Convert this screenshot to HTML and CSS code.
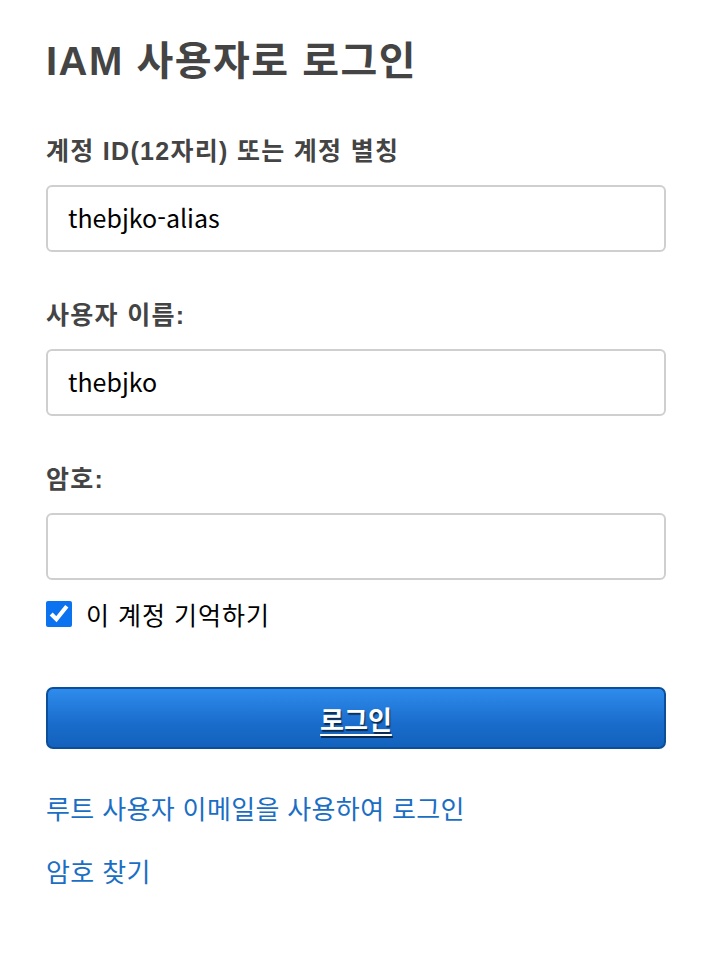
FILE: index.html
```html
<!DOCTYPE html>
<html lang="ko">
<head>
<meta charset="utf-8">
<title>IAM 사용자로 로그인</title>
<link rel="stylesheet" href="styles.css">
</head>
<body>
<main class="signin">
  <h1 class="title">IAM 사용자로 로그인</h1>
  <form class="form">
    <div class="field">
      <label class="label" for="account">계정 ID(12자리) 또는 계정 별칭</label>
      <input class="input" id="account" type="text" value="thebjko-alias">
    </div>
    <div class="field">
      <label class="label" for="username">사용자 이름:</label>
      <input class="input" id="username" type="text" value="thebjko">
    </div>
    <div class="field field-password">
      <label class="label" for="password">암호:</label>
      <input class="input" id="password" type="password">
    </div>
    <label class="remember">
      <input class="check" type="checkbox" checked>
      <span>이 계정 기억하기</span>
    </label>
    <button class="submit" type="button"><span>로그인</span></button>
  </form>
  <nav class="links">
    <a class="link" href="#">루트 사용자 이메일을 사용하여 로그인</a>
    <a class="link" href="#">암호 찾기</a>
  </nav>
</main>
</body>
</html>
```
FILE: styles.css
```css
* { box-sizing: border-box; }
html, body { margin: 0; background: #fff; }
body {
  font-family: "Noto Sans CJK KR", "Noto Sans", sans-serif;
  color: #000;
}
.signin {
  width: 620px;
  margin-left: 46px;
  padding-top: 33px;
}
.title {
  margin: 0;
  font-family: "Liberation Sans", "Noto Sans CJK KR", sans-serif;
  font-weight: 700;
  font-size: 40px;
  line-height: 56px;
  letter-spacing: 1.5px;
  color: #444;
}
.form { display: flex; flex-direction: column; margin-top: 45px; }
.field { display: flex; flex-direction: column; margin-bottom: 46px; }
.field-password { margin-bottom: 21px; }
.label {
  font-family: "Liberation Sans", "Noto Sans CJK KR", sans-serif;
  font-weight: 700;
  font-size: 25px;
  line-height: 34px;
  letter-spacing: 1.3px;
  color: #444;
  margin-bottom: 17px;
}
.input {
  height: 67px;
  border: 2px solid #cfcfcf;
  border-radius: 6px;
  padding: 0 20px 3px;
  font-family: "Noto Sans CJK KR", sans-serif;
  font-size: 25px;
  color: #000;
  background: #fff;
  outline: none;
}
.remember {
  display: flex;
  align-items: center;
  gap: 14px;
  font-size: 25px;
  letter-spacing: 1px;
  height: 26px;
}
.check {
  width: 26px;
  height: 26px;
  margin: 0;
  accent-color: #0b72f0;
}
.submit {
  margin-top: 60px;
  height: 62px;
  width: 100%;
  border: 2px solid #0c4f98;
  border-radius: 7px;
  background: linear-gradient(#2e8cec, #1a6ccb 60%, #1262bd);
  color: #fff;
  font-family: "Noto Sans CJK KR", sans-serif;
  font-weight: 700;
  font-size: 26px;
  text-decoration: underline;
  text-underline-offset: 4px;
  text-shadow: 1px 2px 1px rgba(0,0,0,0.6);
  cursor: pointer;
}
.links {
  display: flex;
  flex-direction: column;
  gap: 27px;
  margin-top: 41px;
}
.link {
  font-size: 26px;
  line-height: 36px;
  letter-spacing: 0.35px;
  color: #1a6ec4;
  text-decoration: none;
}
```
